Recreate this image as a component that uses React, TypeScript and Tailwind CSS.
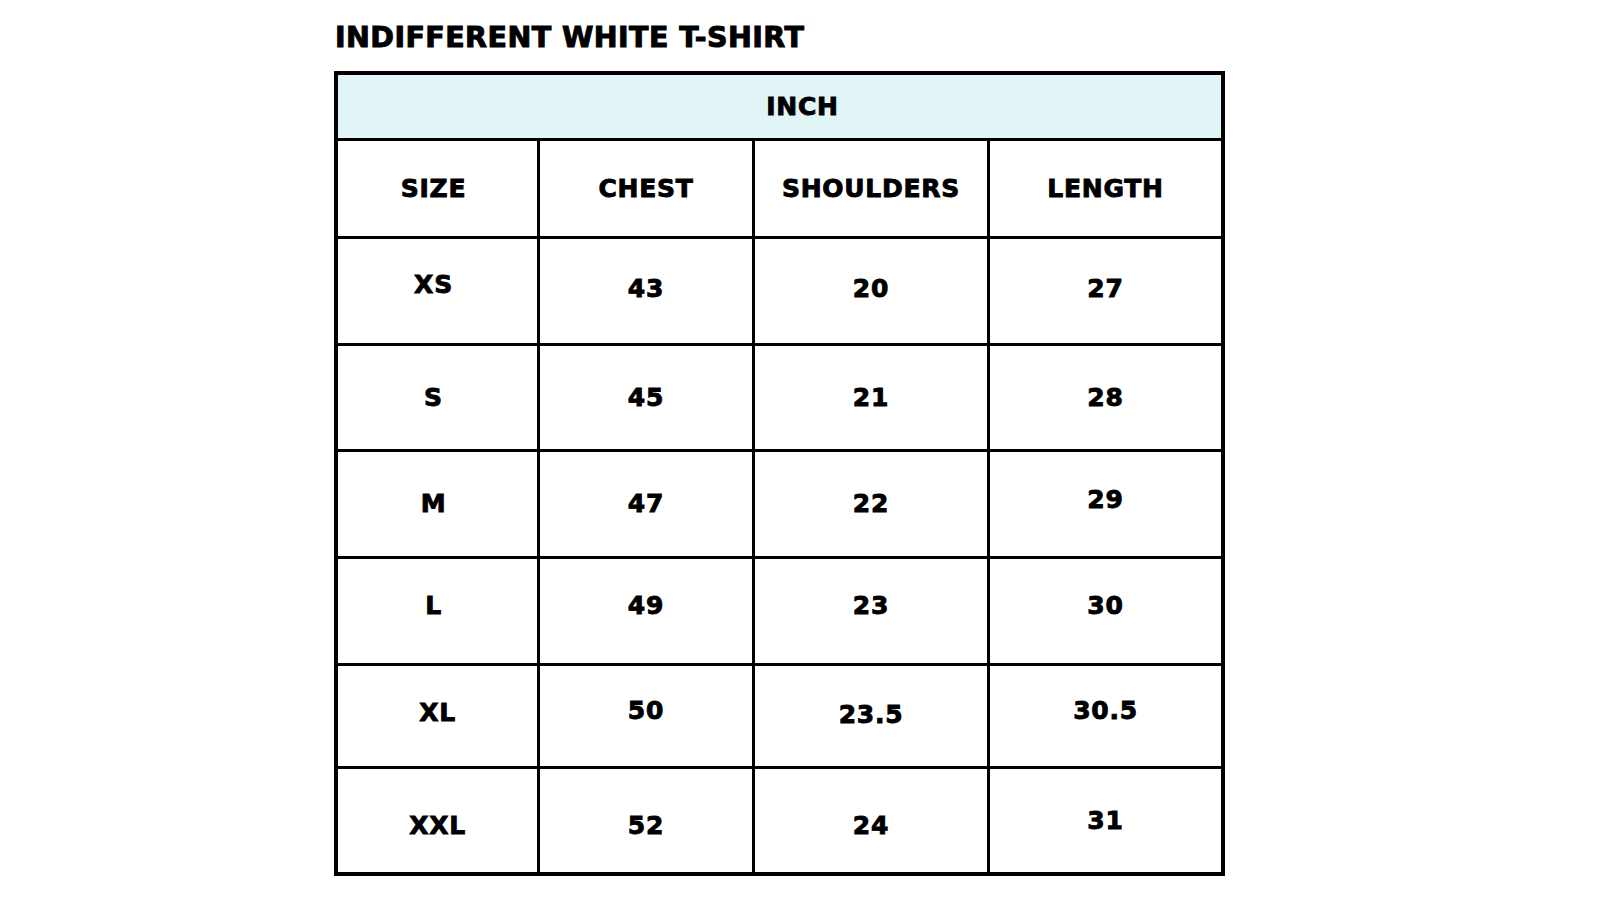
import React from 'react';

type Cell = { text: string; className?: string };
type Row = { height: string; cells: Cell[] };

const colWidths = ['w-[202px]', 'w-[215px]', 'w-[235px]', 'w-[231px]'];

const headerRow: Row = {
    height: 'h-[98px]',
    cells: [
        { text: 'SIZE', className: 'pr-2' },
        { text: 'CHEST' },
        { text: 'SHOULDERS' },
        { text: 'LENGTH' },
    ],
};

const rows: Row[] = [
    {
        height: 'h-[107px]',
        cells: [
            { text: 'XS', className: 'pr-2 pb-[12px]' },
            { text: '43', className: 'pb-1' },
            { text: '20', className: 'pb-1' },
            { text: '27', className: 'pb-1' },
        ],
    },
    {
        height: 'h-[106px]',
        cells: [
            { text: 'S', className: 'pr-2' },
            { text: '45' },
            { text: '21' },
            { text: '28' },
        ],
    },
    {
        height: 'h-[107px]',
        cells: [
            { text: 'M', className: 'pr-2' },
            { text: '47' },
            { text: '22' },
            { text: '29', className: 'pb-2' },
        ],
    },
    {
        height: 'h-[107px]',
        cells: [
            { text: 'L', className: 'pr-2 pb-[11px]' },
            { text: '49', className: 'pb-[11px]' },
            { text: '23', className: 'pb-[11px]' },
            { text: '30', className: 'pb-[11px]' },
        ],
    },
    {
        height: 'h-[103px]',
        cells: [
            { text: 'XL', className: 'pb-[6px]' },
            { text: '50', className: 'pb-[10px]' },
            { text: '23.5', className: 'pb-[2px]' },
            { text: '30.5', className: 'pb-[10px]' },
        ],
    },
    {
        height: 'h-[103px]',
        cells: [
            { text: 'XXL', className: 'pt-[10px]' },
            { text: '52', className: 'pt-[10px]' },
            { text: '24', className: 'pt-[10px]' },
            { text: '31' },
        ],
    },
];

const label =
    'text-[25px] leading-none font-bold tracking-[0.03em] text-black [-webkit-text-stroke:0.9px_black]';

function TableRow({ row, last }: { row: Row; last?: boolean }) {
    return (
        <div
            className={`flex ${row.height} ${last ? '' : 'border-b-[3px] border-black'}`}
        >
            {row.cells.map((cell, i) => (
                <div
                    key={i}
                    className={`${colWidths[i]} flex shrink-0 items-center justify-center ${
                        i < 3 ? 'border-r-[3px] border-black' : ''
                    } ${cell.className ?? ''}`}
                >
                    <span className={label}>{cell.text}</span>
                </div>
            ))}
        </div>
    );
}

export default function App() {
    return (
        <div
            className="min-h-[900px] w-full bg-white"
            style={{ fontFamily: '"DejaVu Sans", "Liberation Sans", sans-serif' }}
        >
            <div className="ml-[334px] w-[891px] pt-[24px]">
                <h1 className="ml-px text-[28.5px] leading-none font-bold tracking-[0.015em] text-black [-webkit-text-stroke:1px_black]">
                    INDIFFERENT WHITE T-SHIRT
                </h1>
                <div className="mt-[18px] border-4 border-black">
                    <div className="flex h-[66px] items-center justify-center border-b-[3px] border-black bg-[#e1f5f6] pl-[46px]">
                        <span className={label}>INCH</span>
                    </div>
                    <TableRow row={headerRow} />
                    {rows.map((row, i) => (
                        <TableRow key={i} row={row} last={i === rows.length - 1} />
                    ))}
                </div>
            </div>
        </div>
    );
}
